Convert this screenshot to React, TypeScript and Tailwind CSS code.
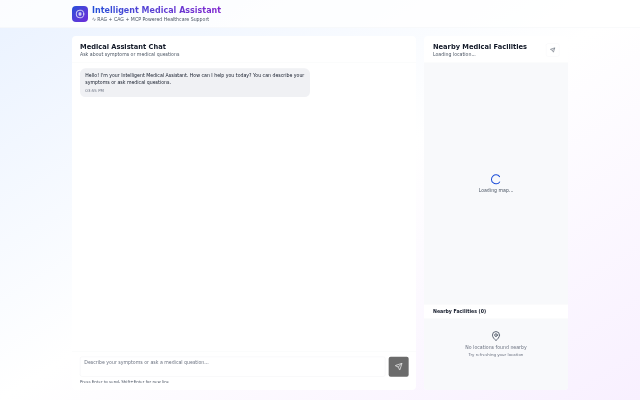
import { Activity, Loader2, MapPin, Send } from "lucide-react";

export default function App() {
  return (
    <div className="w-[640px] h-[400px] overflow-hidden">
      <div className="w-[1920px] h-[1200px] scale-[0.33333] origin-top-left flex flex-col bg-gradient-to-br from-[#eaf2ff] via-white to-[#f8f0ff] font-['DejaVu_Sans',sans-serif] text-[#111827]">
        <header className="h-[84px] shrink-0 bg-white/80 border-b border-[#eceef1]">
          <div className="w-[1488px] mx-auto flex items-center gap-3 h-[83px]">
            <div className="w-12 h-12 rounded-xl bg-gradient-to-br from-[#1d4ed8] to-[#6d28d9] flex items-center justify-center">
              <svg viewBox="0 0 24 24" className="w-7 h-7 text-white" fill="none" stroke="currentColor" strokeWidth="2" strokeLinecap="round" strokeLinejoin="round">
                <circle cx="12" cy="12" r="10" />
                <path d="M12 8v8M9 10h6M9 14h6" />
              </svg>
            </div>
            <div>
              <div className="text-2xl leading-8 font-bold bg-gradient-to-r from-[#1d4ed8] to-[#7e22ce] bg-clip-text text-transparent">Intelligent Medical Assistant</div>
              <div className="text-sm leading-5 text-[#4b5563] flex items-center gap-1">
                <Activity className="w-3 h-3" />
                <span>RAG + CAG + MCP Powered Healthcare Support</span>
              </div>
            </div>
          </div>
        </header>
        <main className="w-[1488px] mx-auto mt-6 h-[1062px] flex gap-6">
          <section className="w-[1032px] bg-white rounded-xl flex flex-col">
            <div className="h-[81px] px-6 pt-1 flex flex-col justify-center border-b border-[#f3f4f6]">
              <div className="text-xl leading-7 font-bold">Medical Assistant Chat</div>
              <div className="text-sm leading-5 text-[#4b5563]">Ask about symptoms or medical questions</div>
            </div>
            <div className="flex-1 p-6 pt-4">
              <div className="w-[690px] rounded-2xl bg-[#f0f1f4] px-4 pt-[10px] pb-3">
                <div className="text-sm leading-[22px] text-[#111827]">Hello! I'm your Intelligent Medical Assistant. How can I help you today? You can describe your symptoms or ask medical questions.</div>
                <div className="text-xs leading-4 text-[#6b7280] mt-1">03:55 PM</div>
              </div>
            </div>
            <div className="h-[117px] px-6 pt-4 border-t border-[#f3f4f6]">
              <div className="flex gap-[10px]">
                <div className="flex-1 h-[60px] rounded-md border border-[#eceef1] px-3 pt-[6px] text-sm leading-5 text-[#6b7280]">Describe your symptoms or ask a medical question...</div>
                <div className="w-[60px] h-[60px] mr-[-2px] rounded-md bg-[#6b6b6b] flex items-center justify-center">
                  <Send className="w-6 h-6 text-white" />
                </div>
              </div>
              <div className="text-xs leading-4 text-[#4b5563] mt-2">Press Enter to send, Shift+Enter for new line</div>
            </div>
          </section>
          <section className="w-[432px] bg-white rounded-xl flex flex-col overflow-hidden">
            <div className="h-[81px] pl-[27px] pr-[30px] pt-1 border-b border-[#f3f4f6] flex justify-between items-center">
              <div>
                <div className="text-xl leading-7 font-bold whitespace-nowrap">Nearby Medical Facilities</div>
                <div className="text-sm leading-5 text-[#4b5563]">Loading location...</div>
              </div>
              <div className="w-10 h-10 mr-[-4px] rounded-md border border-[#f3f4f6] flex items-center justify-center">
                <Send className="w-4 h-4 text-[#374151]" />
              </div>
            </div>
            <div className="h-[723px] bg-[#f8f9fb] flex flex-col items-center justify-center">
              <Loader2 className="w-9 h-9 text-[#1d4ed8] rotate-[35deg]" />
              <div className="text-sm leading-5 text-[#4b5563] mt-[6px]">Loading map...</div>
            </div>
            <div className="h-[45px] pl-[27px] flex items-center border-y border-[#f3f4f6] text-sm font-bold">Nearby Facilities (0)</div>
            <div className="flex-1 bg-[#f8f9fb] flex flex-col items-center pt-[35px]">
              <MapPin className="w-8 h-8 text-[#4b5563]" />
              <div className="text-sm leading-5 text-[#6b7280] mt-[9px]">No locations found nearby</div>
              <div className="text-xs leading-4 text-[#6b7280] mt-[3px]">Try refreshing your location</div>
            </div>
          </section>
        </main>
      </div>
    </div>
  );
}
